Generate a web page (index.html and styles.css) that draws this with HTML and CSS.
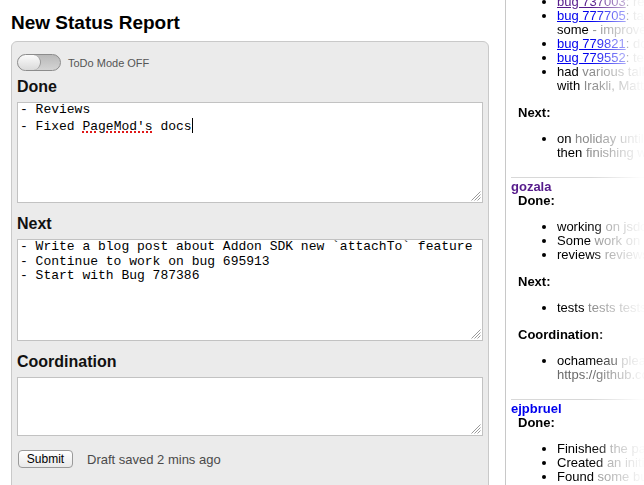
FILE: index.html
```html
<!DOCTYPE html>
<html lang="en">
<head>
<meta charset="utf-8">
<title>New Status Report</title>
<link rel="stylesheet" href="styles.css">
</head>
<body>
<div class="page">
  <main class="main">
    <h1 class="title">New Status Report</h1>
    <form class="panel">
      <div class="todo-row">
        <span class="toggle"><span class="knob"></span></span>
        <span class="todo-label">ToDo Mode OFF</span>
      </div>

      <h2 class="field-title first">Done</h2>
      <div class="box box-done" role="textbox">- Reviews
- Fixed <span class="spell">PageMod's</span> docs<span class="caret"></span><svg class="grip" width="11" height="11" viewBox="0 0 11 11"><path d="M10.5 1.5 L1.5 10.5 M10.5 4.5 L4.5 10.5 M10.5 7.5 L7.5 10.5" stroke="#9a9a9a" stroke-width="1"/></svg></div>

      <h2 class="field-title">Next</h2>
      <div class="box box-next" role="textbox">- Write a blog post about Addon SDK new `attachTo` feature
- Continue to work on bug 695913
- Start with Bug 787386<svg class="grip" width="11" height="11" viewBox="0 0 11 11"><path d="M10.5 1.5 L1.5 10.5 M10.5 4.5 L4.5 10.5 M10.5 7.5 L7.5 10.5" stroke="#9a9a9a" stroke-width="1"/></svg></div>

      <h2 class="field-title">Coordination</h2>
      <div class="box box-coord" role="textbox"><svg class="grip" width="11" height="11" viewBox="0 0 11 11"><path d="M10.5 1.5 L1.5 10.5 M10.5 4.5 L4.5 10.5 M10.5 7.5 L7.5 10.5" stroke="#9a9a9a" stroke-width="1"/></svg></div>

      <div class="submit-row">
        <button type="button" class="submit">Submit</button>
        <span class="draft">Draft saved 2 mins ago</span>
      </div>
    </form>
  </main>

  <aside class="side">
    <div class="feed">
      <section class="entry cont">
        <ul class="items">
          <li><a class="bug visited" href="#">bug 737003</a>: <span class="r">review</span></li>
          <li><a class="bug" href="#">bug 777705</a>: <span class="r">tabs</span><br><span class="w">some</span> <span class="r">- improvements</span></li>
          <li><a class="bug" href="#">bug 779821</a>: <span class="r">docs</span></li>
          <li><a class="bug" href="#">bug 779552</a>: <span class="r">tests</span></li>
          <li><span class="w">had</span> <span class="r">various talks</span><br><span class="w">with</span> <span class="r">Irakli, Matteo</span></li>
        </ul>
        <h4 class="sec">Next:</h4>
        <ul class="items">
          <li><span class="w">on</span> <span class="r">holiday until</span><br><span class="w">then</span> <span class="r">finishing work</span></li>
        </ul>
      </section>

      <section class="entry">
        <a class="user visited" href="#">gozala</a>
        <h4 class="sec">Done:</h4>
        <ul class="items">
          <li><span class="w">working</span> <span class="r">on jsdocs</span></li>
          <li><span class="w">Some</span> <span class="r">work on</span></li>
          <li><span class="w">reviews</span> <span class="r">reviews</span></li>
        </ul>
        <h4 class="sec">Next:</h4>
        <ul class="items">
          <li><span class="w">tests</span> <span class="r">tests tests</span></li>
        </ul>
        <h4 class="sec">Coordination:</h4>
        <ul class="items">
          <li><span class="w">ochameau</span> <span class="r">please</span><br><span class="m">https://github.com</span></li>
        </ul>
      </section>

      <section class="entry">
        <a class="user" href="#">ejpbruel</a>
        <h4 class="sec">Done:</h4>
        <ul class="items">
          <li><span class="w">Finished</span> <span class="r">the patch</span></li>
          <li><span class="w">Created</span> <span class="r">an initial</span></li>
          <li><span class="w">Found</span> <span class="r">some bugs</span></li>
        </ul>
      </section>
    </div>
  </aside>
</div>
</body>
</html>
```

FILE: styles.css
```css
html, body {
  margin: 0;
  padding: 0;
  height: 485px;
  overflow: hidden;
  background: #fff;
}

body {
  font-family: "Liberation Sans", Arial, Helvetica, sans-serif;
  color: #000;
}

.page {
  display: flex;
  height: 485px;
  overflow: hidden;
}

/* ---------- left column ---------- */
.main {
  width: 478px;
  margin-left: 11px;
  flex: none;
}

.title {
  margin: 12px 0 7px;
  font-size: 19px;
  line-height: 22px;
  font-weight: bold;
  color: #000;
}

.panel {
  box-sizing: border-box;
  border: 1px solid #c9c9c9;
  border-radius: 6px;
  background: #ebebeb;
  padding: 12px 5px 30px;
  margin: 0;
}

.todo-row {
  display: flex;
  align-items: center;
  height: 17px;
  gap: 7px;
}

.toggle {
  box-sizing: border-box;
  display: flex;
  width: 44px;
  height: 17px;
  border: 1px solid #8c8c8c;
  border-radius: 9px;
  background: linear-gradient(#b9b9b9, #d4d4d4);
  overflow: hidden;
}

.knob {
  box-sizing: border-box;
  width: 23px;
  height: 15px;
  border-radius: 8px;
  border-right: 1px solid #9a9a9a;
  background: linear-gradient(#fbfbfb, #dadada);
}

.todo-label {
  font-size: 11px;
  color: #555;
}

.field-title {
  margin: 12px 0 6px;
  font-size: 16px;
  line-height: 18px;
  font-weight: bold;
  color: #111;
}

.field-title.first {
  margin-top: 7px;
}

.box {
  box-sizing: border-box;
  position: relative;
  background: #fff;
  border: 1px solid #c2c2c2;
  padding: 0 2px;
  font-family: "Liberation Mono", "Courier New", monospace;
  font-size: 13px;
  line-height: 14.5px;
  white-space: pre;
  overflow: hidden;
  color: #000;
}

.box-done { height: 101px; }
.box-next { height: 102px; }
.box-coord { height: 59px; }

.spell {
  text-decoration: underline dotted #e01818;
  text-decoration-thickness: 2px;
  text-underline-offset: 2px;
}

.caret {
  display: inline-block;
  width: 1px;
  height: 15px;
  background: #000;
  vertical-align: -3px;
}

.grip {
  position: absolute;
  right: 1px;
  bottom: 1px;
}

.submit-row {
  display: flex;
  align-items: center;
  gap: 14px;
  margin-top: 14px;
  margin-left: 1px;
}

.submit {
  box-sizing: border-box;
  width: 55px;
  height: 18px;
  padding: 0;
  border: 1px solid #9a9a9a;
  border-radius: 4px;
  background: linear-gradient(#ffffff, #e9e9e9);
  font-family: "Liberation Sans", Arial, sans-serif;
  font-size: 12px;
  line-height: 16px;
  color: #000;
}

.draft {
  font-size: 13px;
  color: #4a4a4a;
}

/* ---------- right column ---------- */
.side {
  flex: 1;
  margin-left: 16px;
  border-left: 1px solid #c8c8c8;
  overflow: hidden;
  -webkit-mask-image: linear-gradient(to right, #000 86px, rgba(0,0,0,0.05) 136px);
  mask-image: linear-gradient(to right, #000 86px, rgba(0,0,0,0.05) 136px);
}

.feed {
  margin-top: -17.5px;
  font-size: 13px;
  line-height: 14px;
  white-space: nowrap;
}

.entry {
  margin-left: 5px;
  border-top: 1px solid #d8d8d8;
  padding: 2px 0 4px;
}

.entry.cont {
  border-top: 0;
  padding-top: 0;
}

.user {
  display: block;
  font-weight: bold;
  color: #0000ee;
  text-decoration: none;
}

.user.visited {
  color: #551a8b;
}

.sec {
  margin: 0;
  padding-left: 7px;
  font-size: 13px;
  line-height: 14px;
  font-weight: bold;
  color: #000;
}

.items {
  margin: 12.5px 0;
  padding-left: 46px;
  list-style: disc;
}

.bug {
  color: #0000ee;
  text-decoration: underline;
}

.bug.visited {
  color: #551a8b;
}

.w { color: #000; }
.r { color: #8a8a8a; }
.m { color: #6a6a6a; }
```
